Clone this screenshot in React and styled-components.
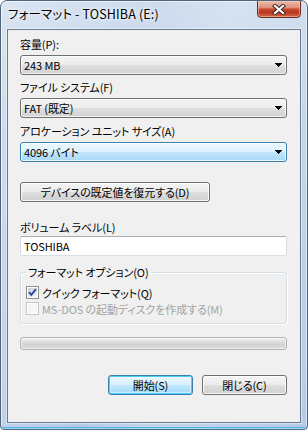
import React from 'react';
import styled, { createGlobalStyle } from 'styled-components';

const Global = createGlobalStyle`
  html, body { margin: 0; padding: 0; background: #fff; }
  body {
    font-family: "Noto Sans CJK JP", "Noto Sans", sans-serif;
    font-size: 12px;
    color: #000;
    font-feature-settings: "palt";
  }
  * { box-sizing: border-box; }
`;

const Window = styled.div`
  width: 308px;
  height: 430px;
  display: flex;
  flex-direction: column;
  padding: 0 6px 6px;
  border: 1px solid #52647a;
  border-radius: 7px 7px 4px 4px;
  background: linear-gradient(100deg, rgba(255,255,255,0.25) 0%, rgba(255,255,255,0) 40%, rgba(255,255,255,0.18) 60%, rgba(255,255,255,0) 100%),
    linear-gradient(180deg, #cddcee 0%, #c0d3e8 30%, #b7cce4 100%);
  box-shadow: inset 0 0 0 1px rgba(255,255,255,0.55), inset 0 -2px 0 #48b1e6;
  overflow: hidden;
`;

const TitleBar = styled.div`
  height: 28px;
  flex: none;
  display: flex;
  align-items: flex-start;
  justify-content: space-between;
`;

const Title = styled.div`
  margin: 5px 0 0 1px;
  line-height: 15px;
  font-size: 12.5px;
  letter-spacing: 0.15px;
  color: #000;
  text-shadow: 0 0 6px rgba(255,255,255,0.95), 0 0 3px rgba(255,255,255,0.9);
`;

const CloseButton = styled.div`
  width: 44px;
  height: 18px;
  margin-top: -1px;
  display: flex;
  align-items: center;
  justify-content: center;
  border: 1px solid #6a2d21;
  border-radius: 0 0 4px 4px;
  background: linear-gradient(180deg, #ecb7a8 0%, #df9380 40%, #c6462e 52%, #b8391f 72%, #d76846 100%);
  box-shadow: inset 0 0 0 1px rgba(255,220,210,0.45);
`;

const Client = styled.div`
  flex: 1;
  display: flex;
  flex-direction: column;
  padding: 0 13px 0 12px;
  background: #f0f0f0;
  border: 1px solid #687a8e;
  box-shadow: 0 0 0 1px rgba(255,255,255,0.45);
  font-size: 11px;
  letter-spacing: -0.1px;
`;

const Label = styled.div`
  line-height: 15px;
  margin-top: ${p => p.$mt}px;
  white-space: nowrap;
`;

const Combo = styled.div`
  height: 20px;
  margin-top: 3px;
  display: flex;
  align-items: center;
  justify-content: space-between;
  padding: 0 4px 0 3px;
  border: 1px solid ${p => (p.$focused ? '#3c7fb1' : '#707070')};
  border-radius: 3px;
  line-height: 15px;
  background: ${p =>
    p.$focused
      ? 'linear-gradient(180deg, #ecf7fd 0%, #ddf1fc 48%, #c1e6fc 52%, #a9d9f5 100%)'
      : 'linear-gradient(180deg, #f4f4f4 0%, #ececec 48%, #dedede 52%, #d2d2d2 100%)'};
  box-shadow: inset 0 0 0 1px rgba(255,255,255,0.7);
`;

const Button = styled.div`
  width: ${p => p.$w}px;
  height: 20px;
  display: flex;
  align-items: center;
  justify-content: center;
  line-height: 15px;
  white-space: nowrap;
  border: 1px solid ${p => (p.$primary ? '#3c7fb1' : '#707070')};
  border-radius: 3px;
  background: ${p =>
    p.$primary
      ? 'linear-gradient(180deg, #eaf6fd 0%, #d9f0fc 48%, #bee6fd 52%, #a7d9f5 100%)'
      : 'linear-gradient(180deg, #f4f4f4 0%, #ececec 48%, #dedede 52%, #d0d0d0 100%)'};
  box-shadow: ${p =>
    p.$primary
      ? 'inset 0 0 0 1px #48d0f8, inset 0 0 0 2px rgba(255,255,255,0.4)'
      : 'inset 0 0 0 1px rgba(255,255,255,0.85)'};
`;

const RestoreButton = styled(Button)`
  margin-top: 20px;
`;

const TextBox = styled.div`
  height: 20px;
  margin-top: 1px;
  display: flex;
  align-items: center;
  padding: 0 3px;
  line-height: 15px;
  background: #fff;
  border: 1px solid #dadde2;
  border-top-color: #abadb3;
  border-radius: 2px;
`;

const Group = styled.fieldset`
  margin: 9px 0 0;
  padding: 0 5px 6px;
  min-width: 0;
  border: 1px solid #d5dfe5;
  border-radius: 3px;
  box-shadow: inset 1px 1px 0 #fff, 1px 1px 0 #fff;
`;

const Legend = styled.legend`
  padding: 0 2px;
  line-height: 15px;
`;

const CheckRow = styled.div`
  height: 16px;
  margin-top: ${p => p.$mt}px;
  display: flex;
  align-items: flex-start;
  gap: 3px;
  line-height: 16px;
  white-space: nowrap;
  color: ${p => (p.$disabled ? '#a3a3a3' : '#000')};
  svg { margin-top: 1px; flex: none; }
`;

const Progress = styled.div`
  height: 13px;
  margin-top: 13px;
  border: 1px solid #b4b4b4;
  border-radius: 3px;
  background: linear-gradient(180deg, #f2f2f2 0%, #dedede 35%, #d2d2d2 60%, #dddddd 100%);
  box-shadow: inset 0 0 0 1px rgba(255,255,255,0.5);
`;

const ButtonRow = styled.div`
  margin-top: 25px;
  display: flex;
  justify-content: flex-end;
  gap: 9px;
`;

const Arrow = () => (
  <svg width="7" height="4" viewBox="0 0 7 4" shapeRendering="crispEdges">
    <path d="M0 0h7v1h-1v1h-1v1h-1v1h-1v-1h-1v-1h-1v-1h-1z" fill="#000" />
  </svg>
);

const CloseX = () => (
  <svg width="14" height="11" viewBox="0 0 14 11">
    <path d="M3 2 L11 9 M11 2 L3 9" stroke="#3b2a27" strokeWidth="4.2" strokeLinecap="square" fill="none" />
    <path d="M3 2 L11 9 M11 2 L3 9" stroke="#fff" strokeWidth="2.2" strokeLinecap="square" fill="none" />
  </svg>
);

const CheckBox = ({ checked, disabled }) => (
  <svg width="13" height="13" viewBox="0 0 13 13" shapeRendering="crispEdges">
    <defs>
      <linearGradient id={`cbg${disabled ? 'd' : 'e'}`} x1="0" y1="0" x2="1" y2="1">
        <stop offset="0" stopColor={disabled ? '#f4f4f4' : '#cbcfd5'} />
        <stop offset="1" stopColor={disabled ? '#f7f7f7' : '#f6f6f6'} />
      </linearGradient>
    </defs>
    <rect x="0.5" y="0.5" width="12" height="12" fill="#fff" stroke={disabled ? '#c6c6c6' : '#8e8f8f'} />
    <rect x="2" y="2" width="9" height="9" fill={`url(#cbg${disabled ? 'd' : 'e'})`} />
    {checked && (
      <path
        d="M3 6.2 L5.3 8.8 L10 3.2"
        stroke="#2a4aa8"
        strokeWidth="2"
        fill="none"
        shapeRendering="geometricPrecision"
      />
    )}
  </svg>
);

export default function App() {
  return (
    <>
      <Global />
      <Window>
        <TitleBar>
          <Title>フォーマット - TOSHIBA (E:)</Title>
          <CloseButton>
            <CloseX />
          </CloseButton>
        </TitleBar>
        <Client>
          <Label $mt={7}>容量(P):</Label>
          <Combo>
            <span>243 MB</span>
            <Arrow />
          </Combo>
          <Label $mt={5}>ファイル システム(F)</Label>
          <Combo>
            <span>FAT (既定)</span>
            <Arrow />
          </Combo>
          <Label $mt={6}>アロケーション ユニット サイズ(A)</Label>
          <Combo $focused>
            <span>4096 バイト</span>
            <Arrow />
          </Combo>
          <RestoreButton $w={190}>デバイスの既定値を復元する(D)</RestoreButton>
          <Label $mt={18}>ボリューム ラベル(L)</Label>
          <TextBox>TOSHIBA</TextBox>
          <Group>
            <Legend>フォーマット オプション(O)</Legend>
            <CheckRow $mt={5}>
              <CheckBox checked />
              <span>クイック フォーマット(Q)</span>
            </CheckRow>
            <CheckRow $mt={0} $disabled>
              <CheckBox disabled />
              <span>MS-DOS の起動ディスクを作成する(M)</span>
            </CheckRow>
          </Group>
          <Progress />
          <ButtonRow>
            <Button $w={85} $primary>開始(S)</Button>
            <Button $w={85}>閉じる(C)</Button>
          </ButtonRow>
        </Client>
      </Window>
    </>
  );
}
